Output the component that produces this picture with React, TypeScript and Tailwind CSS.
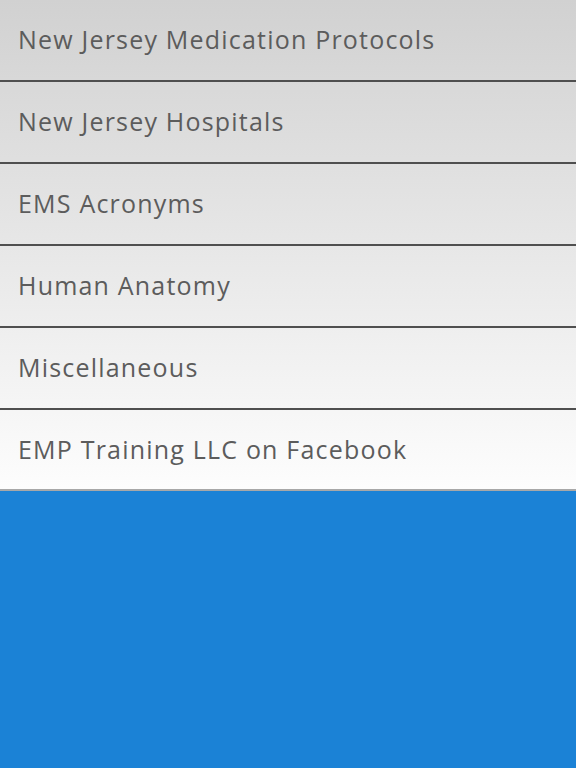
const items = [
  "New Jersey Medication Protocols",
  "New Jersey Hospitals",
  "EMS Acronyms",
  "Human Anatomy",
  "Miscellaneous",
  "EMP Training LLC on Facebook",
]

export default function App() {
  return (
    <div className="h-[768px] w-[576px] flex flex-col bg-[#1b82d6] overflow-hidden">
      <ul className="bg-gradient-to-b from-[#d1d1d1] to-[#fdfdfd] border-b-2 border-[#a8a8a8]">
        {items.map((label, i) => {
          const last = i === items.length - 1
          return (
            <li
              key={label}
              className={
                "flex items-center pl-[18px] text-[25px] text-[#5c5c5c] tracking-[1.2px] " +
                (last ? "h-[79px]" : "h-[80px] box-content border-b-2 border-[#4f4f4f]")
              }
              style={{ fontFamily: '"Open Sans", sans-serif' }}
            >
              {label}
            </li>
          )
        })}
      </ul>
    </div>
  )
}
